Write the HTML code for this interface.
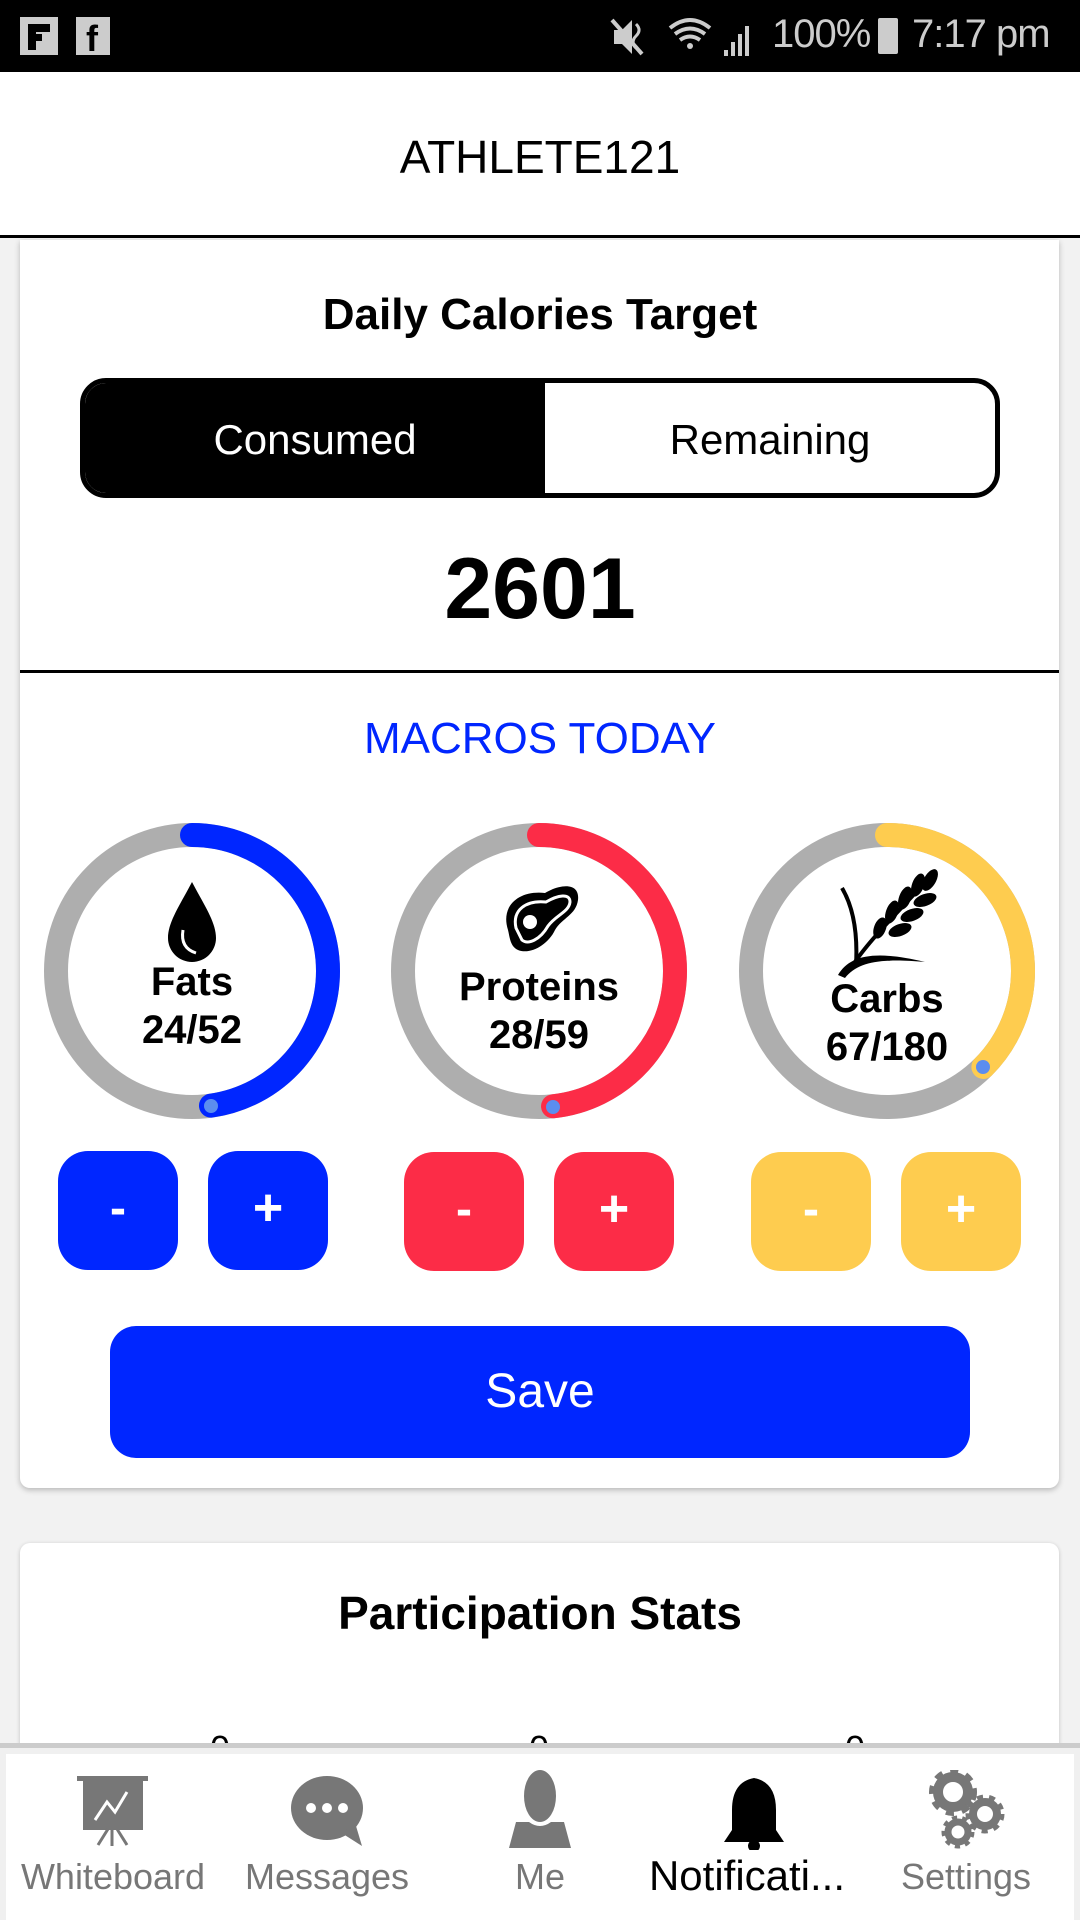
<!DOCTYPE html>
<html><head><meta charset="utf-8"><style>
*{margin:0;padding:0;box-sizing:border-box}
body{width:1080px;height:1920px;position:relative;overflow:hidden;background:#f2f2f2;font-family:"Liberation Sans",Roboto,sans-serif}
.abs{position:absolute}
.c{text-align:center}
</style></head><body>
<!-- status bar -->
<div class="abs" style="left:0;top:0;width:1080px;height:72px;background:#000"></div>
<div class="abs" style="left:20px;top:17px;width:38px;height:38px;background:#ccc"></div>
<div class="abs" style="left:28px;top:24px;width:8px;height:26px;background:#000"></div>
<div class="abs" style="left:28px;top:24px;width:22px;height:8px;background:#000"></div>
<div class="abs" style="left:28px;top:34px;width:14px;height:7px;background:#000"></div>
<div class="abs" style="left:76px;top:17px;width:34px;height:38px;background:#ccc"></div>
<div class="abs" style="left:86px;top:18px;font:bold 36px 'Liberation Sans';color:#000">f</div>
<svg class="abs" style="left:610px;top:16px" width="150" height="44" viewBox="0 0 150 44">
<path d="M4 14h8l10-10v34l-10-10H4z" fill="#ccc"/><path d="M2 4l30 34" stroke="#ccc" stroke-width="4"/>
<path d="M26 8q6 6 0 12q-6 6 0 12" stroke="#ccc" stroke-width="3" fill="none"/>
<path d="M60 12q20-16 40 0M65 18q15-11 30 0M70 24q10-7 20 0" stroke="#ccc" stroke-width="4" fill="none"/><circle cx="80" cy="30" r="3" fill="#ccc"/>
<rect x="114" y="34" width="4" height="6" fill="#ccc"/><rect x="121" y="26" width="4" height="14" fill="#ccc"/><rect x="128" y="18" width="4" height="22" fill="#ccc"/><rect x="135" y="10" width="4" height="30" fill="#ccc"/>
</svg>
<div class="abs" style="left:772px;top:12px;font-size:40px;color:#ccc;letter-spacing:-1px">100%</div>
<div class="abs" style="left:878px;top:18px;width:20px;height:36px;background:#ccc;border-radius:2px"></div>
<div class="abs" style="left:912px;top:12px;font-size:40px;color:#ccc;letter-spacing:-1px">7:17 pm</div>
<!-- header -->
<div class="abs" style="left:0;top:72px;width:1080px;height:166px;background:#fff;border-bottom:3px solid #000"></div>
<div class="abs c" style="left:0;top:130px;width:1080px;font-size:46px;color:#000">ATHLETE121</div>
<!-- card 1 -->
<div class="abs" style="left:20px;top:240px;width:1039px;height:1248px;background:#fff;border-radius:0 0 10px 10px;box-shadow:0 2px 6px rgba(0,0,0,.25)"></div>
<div class="abs c" style="left:0;top:290px;width:1080px;font-weight:bold;font-size:44px">Daily Calories Target</div>
<div class="abs" style="left:80px;top:378px;width:920px;height:120px;border:5px solid #000;border-radius:26px;overflow:hidden;background:#fff">
 <div class="abs" style="left:0;top:0;width:460px;height:110px;background:#000"></div>
 <div class="abs c" style="left:0;top:33px;width:460px;color:#fff;font-size:42px">Consumed</div>
 <div class="abs c" style="left:460px;top:33px;width:450px;color:#000;font-size:42px">Remaining</div>
</div>
<div class="abs c" style="left:0;top:540px;width:1080px;font-weight:bold;font-size:86px">2601</div>
<div class="abs" style="left:20px;top:670px;width:1039px;height:3px;background:#000"></div>
<div class="abs c" style="left:0;top:714px;width:1080px;font-size:44px;color:#0026ff">MACROS TODAY</div>
<svg class="abs" style="left:0;top:0" width="1080" height="1300" viewBox="0 0 1080 1300">
<g fill="none" stroke-width="24">
<circle cx="192" cy="971" r="136" stroke="#aeaeae"/>
<circle cx="539" cy="971" r="136" stroke="#aeaeae"/>
<circle cx="887" cy="971" r="136" stroke="#aeaeae"/>
<circle cx="192" cy="971" r="136" stroke="#0026ff" stroke-linecap="round" stroke-dasharray="408 1000" transform="rotate(-90 192 971)"/>
<circle cx="539" cy="971" r="136" stroke="#fc2c47" stroke-linecap="round" stroke-dasharray="413 1000" transform="rotate(-90 539 971)"/>
<circle cx="887" cy="971" r="136" stroke="#fecc4f" stroke-linecap="round" stroke-dasharray="320 1000" transform="rotate(-90 887 971)"/>
</g>
<circle cx="211" cy="1106" r="7" fill="#5b8def"/><circle cx="553" cy="1107" r="7" fill="#5b8def"/><circle cx="983" cy="1067" r="7" fill="#5b8def"/>
<path d="M192 882 C180 905 168 922 168 938 A24 24 0 0 0 216 938 C216 922 204 905 192 882Z" fill="#000"/>
<path d="M183 930 Q180 948 196 953" stroke="#fff" stroke-width="3" fill="none"/>
<path d="M508 930 C500 905 520 890 545 893 C560 884 580 882 578 900 C576 915 562 918 555 930 C548 945 530 955 518 950 C510 946 510 938 508 930Z" fill="#000"/>
<path d="M516 928 C512 910 526 900 546 902 C558 895 570 893 570 902 C569 912 556 915 548 926 C540 940 528 945 522 940Z" fill="none" stroke="#fff" stroke-width="3"/>
<circle cx="530" cy="922" r="7" fill="#fff"/>
<path d="M838 975 C850 955 875 950 925 962 C880 958 858 962 845 978Z" fill="#000"/>
<path d="M842 888 C852 905 858 930 856 965" stroke="#000" stroke-width="4" fill="none"/>
<path d="M855 962 C870 940 895 915 932 875" stroke="#000" stroke-width="4" fill="none"/>
<g fill="#000">
<ellipse cx="930" cy="880" rx="6" ry="12" transform="rotate(30 930 880)"/>
<ellipse cx="918" cy="885" rx="6" ry="12" transform="rotate(20 918 885)"/>
<ellipse cx="925" cy="900" rx="12" ry="6" transform="rotate(-20 925 900)"/>
<ellipse cx="905" cy="898" rx="6" ry="12" transform="rotate(20 905 898)"/>
<ellipse cx="912" cy="915" rx="12" ry="6" transform="rotate(-20 912 915)"/>
<ellipse cx="892" cy="912" rx="6" ry="12" transform="rotate(20 892 912)"/>
<ellipse cx="900" cy="930" rx="12" ry="6" transform="rotate(-20 900 930)"/>
<ellipse cx="880" cy="928" rx="6" ry="11" transform="rotate(20 880 928)"/>
</g>
</svg>
<div class="abs c" style="left:92px;top:958px;width:200px;font-weight:bold;font-size:40px;line-height:48px">Fats<br>24/52</div>
<div class="abs c" style="left:419px;top:963px;width:240px;font-weight:bold;font-size:40px;line-height:48px">Proteins<br>28/59</div>
<div class="abs c" style="left:767px;top:975px;width:240px;font-weight:bold;font-size:40px;line-height:48px">Carbs<br>67/180</div>
<div class="abs c" style="left:58px;top:1151px;width:120px;height:119px;border-radius:30px;background:#0026ff;color:#fff;font:bold 48px/115px 'Liberation Sans'">-</div>
<div class="abs c" style="left:208px;top:1151px;width:120px;height:119px;border-radius:30px;background:#0026ff;color:#fff;font:bold 52px/115px 'Liberation Sans'">+</div>
<div class="abs c" style="left:404px;top:1152px;width:120px;height:119px;border-radius:30px;background:#fc2c47;color:#fff;font:bold 48px/115px 'Liberation Sans'">-</div>
<div class="abs c" style="left:554px;top:1152px;width:120px;height:119px;border-radius:30px;background:#fc2c47;color:#fff;font:bold 52px/115px 'Liberation Sans'">+</div>
<div class="abs c" style="left:751px;top:1152px;width:120px;height:119px;border-radius:30px;background:#fecc4f;color:#fff;font:bold 48px/115px 'Liberation Sans'">-</div>
<div class="abs c" style="left:901px;top:1152px;width:120px;height:119px;border-radius:30px;background:#fecc4f;color:#fff;font:bold 52px/115px 'Liberation Sans'">+</div>
<div class="abs c" style="left:110px;top:1326px;width:860px;height:132px;border-radius:26px;background:#0026ff;color:#fff;font-size:48px;line-height:132px">Save</div>
<!-- card 2 -->
<div class="abs" style="left:20px;top:1543px;width:1039px;height:300px;background:#fff;border-radius:10px;box-shadow:0 1px 4px rgba(0,0,0,.2)"></div>
<div class="abs c" style="left:0;top:1586px;width:1080px;font-weight:bold;font-size:46px">Participation Stats</div>
<div class="abs" style="left:210px;top:1728px;font-size:36px">0</div>
<div class="abs" style="left:529px;top:1728px;font-size:36px">0</div>
<div class="abs" style="left:845px;top:1728px;font-size:36px">0</div>
<!-- bottom nav -->
<div class="abs" style="left:0;top:1743px;width:1080px;height:177px;background:#f0f0f0;border-top:5px solid #ccc"></div>
<div class="abs" style="left:6px;top:1754px;width:1068px;height:166px;background:#fff"></div>
<svg class="abs" style="left:0;top:1770px" width="1080" height="80" viewBox="0 0 1080 80">
<g fill="#777">
<rect x="77" y="6" width="71" height="5"/><rect x="83" y="10" width="60" height="50"/>
<path d="M95 50l12-18 8 10 12-20" stroke="#fff" stroke-width="3" fill="none"/>
<path d="M98 75l10-16M112 60v16M117 59l10 16" stroke="#777" stroke-width="3"/>
<ellipse cx="327" cy="38" rx="36" ry="32"/><path d="M340 62l22 14-6-20z"/>
<circle cx="311" cy="38" r="5" fill="#fff"/><circle cx="327" cy="38" r="5" fill="#fff"/><circle cx="343" cy="38" r="5" fill="#fff"/>
<ellipse cx="540" cy="26" rx="16" ry="26"/><path d="M516 52h13q11 8 22 0h13l7 26h-62z"/>
</g>
<g fill="none" stroke="#777">
<circle cx="953" cy="22" r="15" stroke-width="10"/><circle cx="953" cy="22" r="21" stroke-width="6" stroke-dasharray="8 8"/>
<circle cx="985" cy="44" r="12" stroke-width="8"/><circle cx="985" cy="44" r="17" stroke-width="5" stroke-dasharray="6 6"/>
<circle cx="958" cy="62" r="10" stroke-width="7"/><circle cx="958" cy="62" r="14" stroke-width="5" stroke-dasharray="5 5"/>
</g>
<path d="M754 2v6q-22 4-22 32v20l-8 12h60l-8-12v-20q0-28-22-32v-6z" fill="#000"/><circle cx="754" cy="76" r="6" fill="#000"/>
</svg>
<div class="abs c" style="left:0;top:1856px;width:226px;font-size:36px;color:#777">Whiteboard</div>
<div class="abs c" style="left:227px;top:1856px;width:200px;font-size:36px;color:#777">Messages</div>
<div class="abs c" style="left:440px;top:1856px;width:200px;font-size:36px;color:#777">Me</div>
<div class="abs c" style="left:637px;top:1852px;width:220px;font-size:42px;color:#000">Notificati...</div>
<div class="abs c" style="left:866px;top:1856px;width:200px;font-size:36px;color:#777">Settings</div>
</body></html>
